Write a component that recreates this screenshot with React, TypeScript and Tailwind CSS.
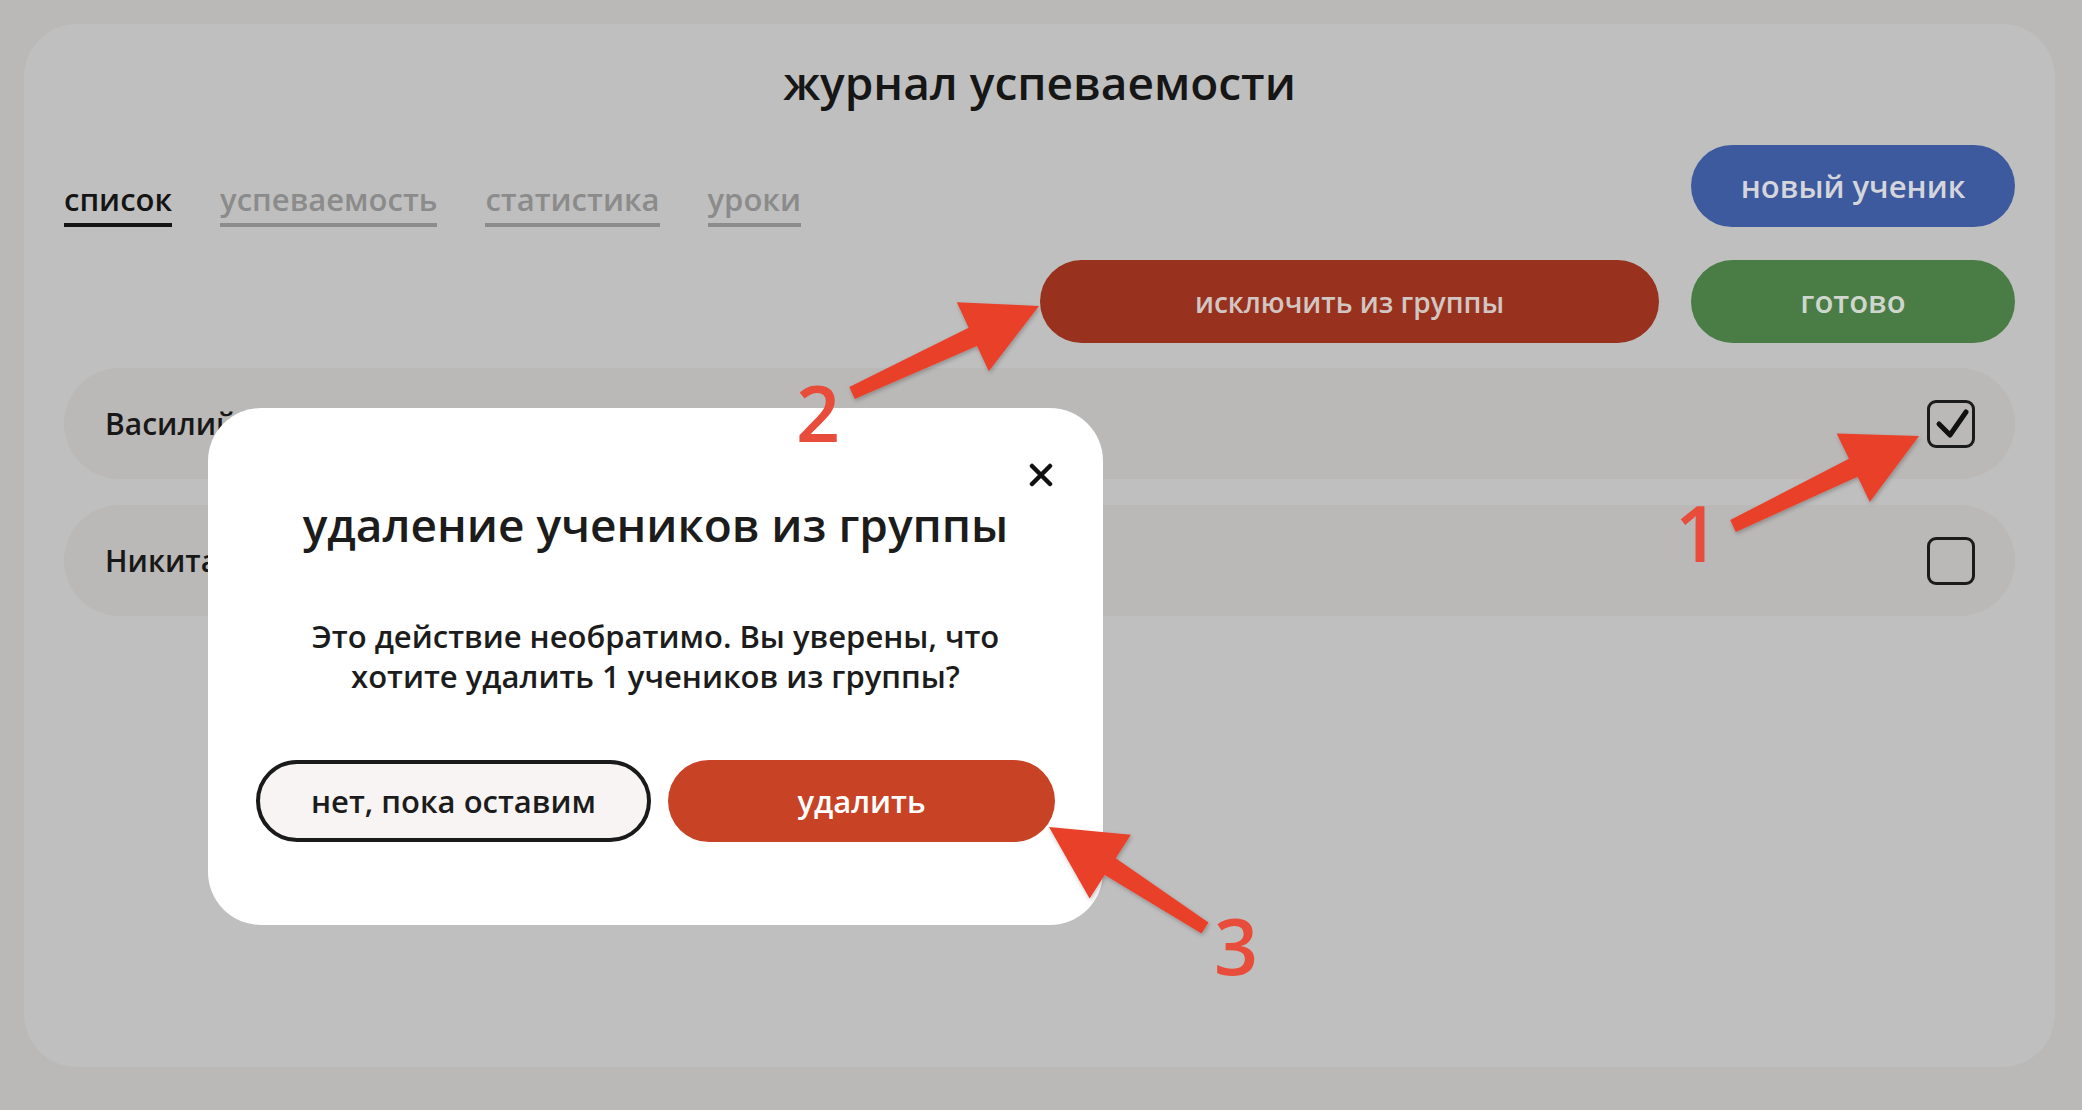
import React from "react"

type Pt = [number, number]

// arrow polygon: tapered shaft + triangular head
function arrowPoints(tail: Pt, tip: Pt, headLen: number, headHalf: number, neckHalf: number, tailHalf: number) {
  const dx = tip[0] - tail[0]
  const dy = tip[1] - tail[1]
  const len = Math.hypot(dx, dy)
  const ux = dx / len
  const uy = dy / len
  const nx = -uy
  const ny = ux
  const bx = tip[0] - ux * headLen
  const by = tip[1] - uy * headLen
  const pts: Pt[] = [
    [tail[0] + nx * tailHalf, tail[1] + ny * tailHalf],
    [bx + nx * neckHalf, by + ny * neckHalf],
    [bx + nx * headHalf, by + ny * headHalf],
    tip,
    [bx - nx * headHalf, by - ny * headHalf],
    [bx - nx * neckHalf, by - ny * neckHalf],
    [tail[0] - nx * tailHalf, tail[1] - ny * tailHalf],
  ]
  return pts.map((p) => `${p[0].toFixed(1)},${p[1].toFixed(1)}`).join(" ")
}

const ARROWS = [
  { tail: [1733, 526] as Pt, tip: [1919, 436] as Pt, label: "1", lx: 1697, ly: 562 },
  { tail: [852, 393] as Pt, tip: [1039, 306] as Pt, label: "2", lx: 818, ly: 442 },
  { tail: [1205, 928] as Pt, tip: [1049, 827] as Pt, label: "3", lx: 1236, ly: 975 },
]

const TABS = [
  { label: "список", active: true },
  { label: "успеваемость", active: false },
  { label: "статистика", active: false },
  { label: "уроки", active: false },
]

const STUDENTS = [
  { name: "Василий Петров", checked: true },
  { name: "Никита Смирнов", checked: false },
]

function Checkbox({ checked }: { checked: boolean }) {
  return (
    <div className="w-12 h-12 rounded-[9px] border-[3px] border-[#1b1b1b] flex items-center justify-center">
      {checked && (
        <svg width="48" height="48" viewBox="0 0 48 48" className="-m-[3px]">
          <path d="M12 24 L23 35 L39 12" fill="none" stroke="#111" strokeWidth="5" strokeLinecap="round" strokeLinejoin="round" />
        </svg>
      )}
    </div>
  )
}

function DeleteModal() {
  return (
    <div className="absolute left-[208px] top-[408px] w-[895px] h-[517px] rounded-[53px] bg-white flex flex-col items-center pt-[88px] px-12">
      <button className="absolute left-[821px] top-[55px] w-6 h-6">
        <svg width="24" height="24" viewBox="0 0 24 24">
          <path d="M3 3 L21 21 M21 3 L3 21" stroke="#111" strokeWidth="4.5" strokeLinecap="round" />
        </svg>
      </button>
      <h2 className="text-[46px] leading-[56px] font-semibold text-[#1c1c1c]">удаление учеников из группы</h2>
      <p className="mt-16 text-[31px] leading-[40px] font-semibold text-[#1c1c1c] text-center">
        Это действие необратимо. Вы уверены, что
        <br />
        хотите удалить 1 учеников из группы?
      </p>
      <div className="mt-16 w-full flex gap-[17px]">
        <button className="flex-1 h-[82px] rounded-full border-4 border-[#1a1a1a] bg-[#f8f4f4] text-[31px] font-semibold text-[#1c1c1c]">
          нет, пока оставим
        </button>
        <button className="flex-1 h-[82px] rounded-full bg-[#c84326] text-[31px] font-semibold text-white">
          удалить
        </button>
      </div>
    </div>
  )
}

export default function App() {
  return (
    <div className="relative w-full h-[1110px] bg-[#bab9b7] pt-6 pb-6 pl-6 pr-[27px] font-['Open_Sans',sans-serif] overflow-hidden">
      <div className="h-[1043px] rounded-[53px] bg-[#bfbfbf] px-10 pt-[28px] flex flex-col">
        <h1 className="text-center text-[46px] leading-[60px] font-semibold text-[#161616]">журнал успеваемости</h1>

        <div className="mt-[33px] flex items-end justify-between">
          <div className="flex gap-12">
            {TABS.map((tab) => (
              <div
                key={tab.label}
                className={`text-[31px] leading-[40px] font-semibold pb-1 border-b-4 ${
                  tab.active ? "text-[#141414] border-[#141414]" : "text-[#8b8b8b] border-[#8c8c8c]"
                }`}
              >
                {tab.label}
              </div>
            ))}
          </div>
          <button className="w-[324px] h-[82px] rounded-full bg-[#3e5a9e] text-[31px] font-semibold text-[#d4d6dc]">
            новый ученик
          </button>
        </div>

        <div className="mt-[33px] flex justify-end gap-8">
          <button className="w-[619px] h-[83px] rounded-full bg-[#98311d] text-[28px] font-semibold text-[#d2c6c3]">
            исключить из группы
          </button>
          <button className="w-[324px] h-[83px] rounded-full bg-[#4a7d45] text-[31px] font-semibold text-[#cfd6ce]">
            готово
          </button>
        </div>

        <div className="mt-[25px] flex flex-col gap-[26px]">
          {STUDENTS.map((s) => (
            <div key={s.name} className="h-[111px] rounded-full bg-[#bab9b7] pl-[41px] pr-10 flex items-center justify-between">
              <span className="text-[30px] font-semibold text-[#181818]">{s.name}</span>
              <Checkbox checked={s.checked} />
            </div>
          ))}
        </div>
      </div>

      <DeleteModal />

      {/* annotation arrows */}
      <svg className="absolute inset-0 pointer-events-none" width="2082" height="1110" viewBox="0 0 2082 1110">
        <defs>
          <filter id="sh" x="-20%" y="-20%" width="140%" height="140%">
            <feDropShadow dx="1" dy="2" stdDeviation="2" floodColor="#000" floodOpacity="0.25" />
          </filter>
        </defs>
        {ARROWS.map((a) => (
          <g key={a.label}>
            <polygon points={arrowPoints(a.tail, a.tip, 73, 38, 10, 6.5)} fill="#e9412b" filter="url(#sh)" />
            <text
              x={a.lx}
              y={a.ly}
              textAnchor="middle"
              fontFamily="Open Sans, sans-serif"
              fontWeight="600"
              fontSize="77"
              fill="#e84c3a"
            >
              {a.label}
            </text>
          </g>
        ))}
      </svg>
    </div>
  )
}
